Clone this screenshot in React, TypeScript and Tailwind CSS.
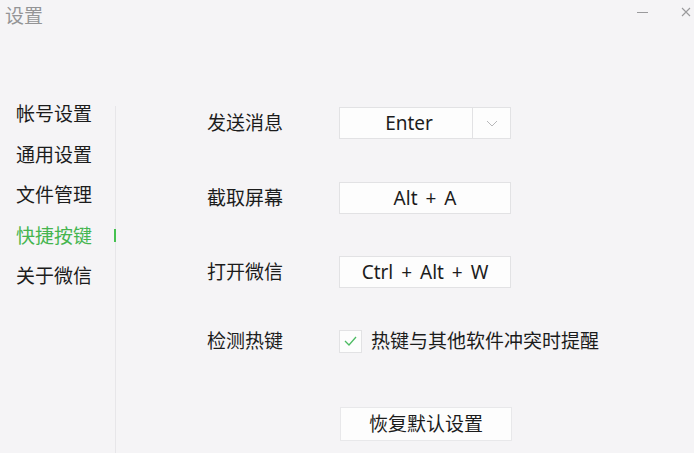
import React from "react";

const font = { fontFamily: '"Noto Sans", "Noto Sans CJK SC", sans-serif' };

function Box({ children }: { children: React.ReactNode }) {
  return (
    <div className="w-[172px] h-[32px] bg-[#fdfdfd] border border-[#e2e2e4] flex items-center justify-center text-[19px] [word-spacing:3px] text-[#1c1c1c]">
      {children}
    </div>
  );
}

export default function App() {
  const nav = ["帐号设置", "通用设置", "文件管理", "快捷按键", "关于微信"];
  return (
    <div
      className="w-[694px] h-[453px] bg-[#f5f4f6] overflow-hidden flex flex-col"
      style={font}
    >
      {/* title bar */}
      <div className="h-[94px] flex items-start justify-between shrink-0">
        <div className="pl-[5px] pt-[3px] text-[19px] leading-[26px] text-[#949496]">设置</div>
        <div className="flex items-center pt-[7px] pr-[2px] gap-[33px]">
          <div className="w-[11px] h-[1px] bg-[#9a9a9c]" />
          <svg width="10" height="10" viewBox="0 0 10 10" className="mr-[1px]">
            <path d="M1 1 L9 9 M9 1 L1 9" stroke="#9a9a9c" strokeWidth="1.1" />
          </svg>
        </div>
      </div>

      <div className="flex flex-1 min-h-0">
        {/* sidebar */}
        <div className="w-[115px] shrink-0 flex flex-col">
          {nav.map((n, i) => (
            <div
              key={n}
              className={`relative h-[40.5px] flex items-center pl-[16px] text-[19px] ${
                i === 3 ? "text-[#45b54f]" : "text-[#1c1c1c]"
              }`}
            >
              {n}
              {i === 3 && (
                <div className="absolute right-[-1px] top-[13px] w-[2px] h-[13px] bg-[#45c150]" />
              )}
            </div>
          ))}
        </div>
        <div className="w-px mt-[12px] bg-[#e7e6e9] shrink-0" />

        {/* content */}
        <div className="flex flex-col pl-[91px] pt-[13px] text-[19px] text-[#1c1c1c]">
          <div className="flex items-center h-[32px]">
            <div className="w-[132px]">发送消息</div>
            <div className="w-[172px] h-[32px] bg-[#fdfdfd] border border-[#e2e2e4] flex text-[19px]">
              <div className="w-[132px] flex items-center justify-center pl-[6px]">Enter</div>
              <div className="w-px bg-[#e2e2e4]" />
              <div className="flex-1 flex items-center justify-center">
                <svg width="12" height="7" viewBox="0 0 12 7">
                  <path d="M1 1 L6 6 L11 1" stroke="#b8b8ba" strokeWidth="1" fill="none" />
                </svg>
              </div>
            </div>
          </div>
          <div className="flex items-center h-[32px] mt-[43px]">
            <div className="w-[132px]">截取屏幕</div>
            <Box>Alt + A</Box>
          </div>
          <div className="flex items-center h-[32px] mt-[42px]">
            <div className="w-[132px]">打开微信</div>
            <Box>Ctrl + Alt + W</Box>
          </div>
          <div className="flex items-center h-[32px] mt-[37px]">
            <div className="w-[132px]">检测热键</div>
            <div className="w-[23px] h-[23px] bg-[#fdfdfd] border border-[#e2e2e4] flex items-center justify-center">
              <svg width="13" height="10" viewBox="0 0 13 10">
                <path d="M1 5 L5 9 L12 1" stroke="#4cbb62" strokeWidth="1.3" fill="none" />
              </svg>
            </div>
            <div className="ml-[9px]">热键与其他软件冲突时提醒</div>
          </div>
          <div className="mt-[50px] ml-[133px] w-[172px] h-[34px] bg-[#fdfdfd] border border-[#e8e8ea] flex items-center justify-center">
            恢复默认设置
          </div>
        </div>
      </div>
    </div>
  );
}
